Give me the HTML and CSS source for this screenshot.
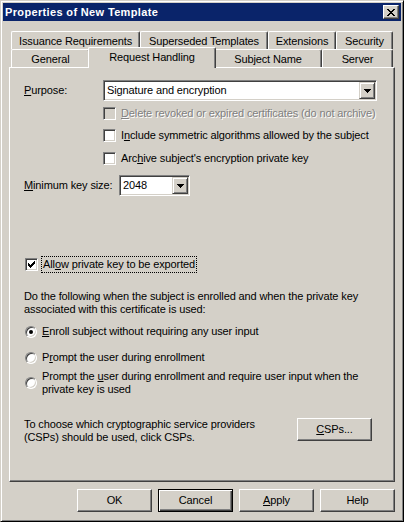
FILE: index.html
```html
<!DOCTYPE html>
<html lang="en">
<head>
    <meta charset="UTF-8">
    <meta name="viewport" content="width=device-width, initial-scale=1.0">
    <title>Properties of New Template</title>
    <link rel="stylesheet" href="styles.css">
</head>
<body>

    <div class="window">
        <div class="titlebar">
            <span class="title">Properties of New Template</span>
            <button class="close-btn">
                <svg width="8" height="7" viewBox="0 0 8 7" shape-rendering="crispEdges"><path d="M0 0h2v1H0zM6 0h2v1H6zM1 1h2v1H1zM5 1h2v1H5zM2 2h4v1H2zM3 3h2v1H3zM2 4h4v1H2zM1 5h2v1H1zM5 5h2v1H5zM0 6h2v1H0zM6 6h2v1H6z" fill="#000"/></svg>
            </button>
        </div>

        <div class="tabs">
            <div class="tab-row">
                <div class="tab tab-issuance">Issuance Requirements</div>
                <div class="tab tab-superseded">Superseded Templates</div>
                <div class="tab tab-extensions">Extensions</div>
                <div class="tab tab-security">Security</div>
            </div>
            <div class="tab-row">
                <div class="tab tab-general">General</div>
                <div class="tab tab-request tab-active">Request Handling</div>
                <div class="tab tab-subject">Subject Name</div>
                <div class="tab tab-server">Server</div>
            </div>
        </div>

        <div class="panel">
            <div class="field-row purpose-row">
                <span class="field-label purpose-label"><u>P</u>urpose:</span>
                <div class="combo combo-purpose">
                    <span class="combo-text">Signature and encryption</span>
                    <span class="combo-btn">
                        <svg width="7" height="4" viewBox="0 0 7 4" shape-rendering="crispEdges"><path d="M0 0h7v1H0zM1 1h5v1H1zM2 2h3v1H2zM3 3h1v1H3z" fill="#000"/></svg>
                    </span>
                </div>
            </div>

            <div class="check-row indent-row row-delete">
                <span class="checkbox checkbox-disabled"></span>
                <span class="check-label disabled"><u>D</u>elete revoked or expired certificates (do not archive)</span>
            </div>
            <div class="check-row indent-row row-include">
                <span class="checkbox"></span>
                <span class="check-label">I<u>n</u>clude symmetric algorithms allowed by the subject</span>
            </div>
            <div class="check-row indent-row row-archive">
                <span class="checkbox"></span>
                <span class="check-label">Arc<u>h</u>ive subject's encryption private key</span>
            </div>

            <div class="field-row keysize-row">
                <span class="field-label keysize-label"><u>M</u>inimum key size:</span>
                <div class="combo combo-keysize">
                    <span class="combo-text">2048</span>
                    <span class="combo-btn">
                        <svg width="7" height="4" viewBox="0 0 7 4" shape-rendering="crispEdges"><path d="M0 0h7v1H0zM1 1h5v1H1zM2 2h3v1H2zM3 3h1v1H3z" fill="#000"/></svg>
                    </span>
                </div>
            </div>

            <div class="check-row allow-row">
                <span class="checkbox">
                    <svg width="7" height="7" viewBox="0 0 7 7" shape-rendering="crispEdges"><path d="M6 0h1v1H6zM5 1h2v1H5zM0 2h1v1H0zM4 2h3v1H4zM0 3h2v1H0zM3 3h3v1H3zM0 4h5v1H0zM1 5h3v1H1zM2 6h1v1H2z" fill="#000"/></svg>
                </span>
                <span class="check-label focused">All<u>o</u>w private key to be exported</span>
            </div>

            <p class="note">Do the following when the subject is enrolled and when the private key<br>associated with this certificate is used:</p>

            <div class="radio-row row-radio1">
                <span class="radio radio-on"></span>
                <span class="radio-label"><u>E</u>nroll subject without requiring any user input</span>
            </div>
            <div class="radio-row row-radio2">
                <span class="radio"></span>
                <span class="radio-label">P<u>r</u>ompt the user during enrollment</span>
            </div>
            <div class="radio-row row-radio3">
                <span class="radio"></span>
                <span class="radio-label">Prompt the <u>u</u>ser during enrollment and require user input when the<br>private key is used</span>
            </div>

            <div class="csp-row">
                <p class="csp-text">To choose which cryptographic service providers<br>(CSPs) should be used, click CSPs.</p>
                <button class="btn"><u>C</u>SPs...</button>
            </div>
        </div>

        <div class="button-row">
            <button class="btn">OK</button>
            <button class="btn btn-default">Cancel</button>
            <button class="btn"><u>A</u>pply</button>
            <button class="btn">Help</button>
        </div>
    </div>

</body>
</html>
```

FILE: styles.css
```css
body {
    margin: 0;
    background-color: #d4d0c8;
    font-family: "Liberation Sans", Arial, sans-serif;
    font-size: 11px;
    line-height: 13px;
    letter-spacing: -0.12px;
    color: #000;
}
u {
    text-decoration-thickness: 1px;
    text-underline-offset: 1px;
}
.window {
    width: 404px;
    height: 522px;
    box-sizing: border-box;
    background: #d4d0c8;
    border: 1px solid;
    border-color: #d4d0c8 #000 #000 #d4d0c8;
    box-shadow: inset 1px 1px #fff, inset -1px -1px #808080;
    padding: 2px;
}
.titlebar {
    display: flex;
    align-items: center;
    justify-content: space-between;
    height: 18px;
    background: #0a246a;
    padding: 0 2px;
}
.title {
    color: #fff;
    font-weight: bold;
    letter-spacing: 0.35px;
}
.close-btn {
    width: 16px;
    height: 14px;
    box-sizing: border-box;
    padding: 0;
    background: #d4d0c8;
    border: 1px solid;
    border-color: #fff #404040 #404040 #fff;
    box-shadow: inset -1px -1px #808080;
    display: flex;
    align-items: center;
    justify-content: center;
}

/* tabs */
.tabs {
    margin: 10px 0 0 8px;
}
.tab-row {
    display: flex;
    align-items: flex-start;
    height: 18px;
}
.tab {
    height: 18px;
    box-sizing: border-box;
    display: flex;
    align-items: center;
    justify-content: center;
    padding-top: 1px;
    background: #d4d0c8;
    border-top: 1px solid #fff;
    border-left: 1px solid #fff;
    border-right: 1px solid #404040;
    box-shadow: inset -1px 0 #808080;
    border-radius: 2px 2px 0 0;
    white-space: nowrap;
}
.tab-issuance { width: 129px; }
.tab-superseded { width: 128px; }
.tab-extensions { width: 68px; }
.tab-security { width: 57px; }
.tab-general { width: 79px; }
.tab-request { width: 128px; }
.tab-subject { width: 108px; }
.tab-server { width: 71px; }
.tab-active {
    position: relative;
    z-index: 1;
    height: 21px;
    margin: -2px -2px -1px;
    padding-top: 0;
    padding-bottom: 1px;
}

/* panel */
.panel {
    margin-left: 6px;
    width: 386px;
    height: 415px;
    box-sizing: border-box;
    border: 1px solid;
    border-color: #fff #404040 #404040 #fff;
    box-shadow: inset -1px -1px #808080;
    padding-left: 14px;
}
.field-row {
    display: flex;
    align-items: center;
    height: 21px;
}
.purpose-row { margin-top: 12px; }
.purpose-label { width: 79px; }
.combo-purpose { width: 274px; }
.keysize-row { margin-top: 10px; }
.keysize-label { width: 95px; }
.combo-keysize { width: 71px; }

.combo {
    display: flex;
    align-items: center;
    height: 21px;
    box-sizing: border-box;
    padding: 1px;
    background: #fff;
    border: 1px solid;
    border-color: #808080 #fff #fff #808080;
    box-shadow: inset 1px 1px #404040, inset -1px -1px #d4d0c8;
}
.combo-text {
    flex: 1;
    padding-left: 2px;
    white-space: nowrap;
}
.combo-btn {
    width: 16px;
    height: 17px;
    box-sizing: border-box;
    display: flex;
    align-items: center;
    justify-content: center;
    background: #d4d0c8;
    border: 1px solid;
    border-color: #d4d0c8 #404040 #404040 #d4d0c8;
    box-shadow: inset 1px 1px #fff, inset -1px -1px #808080;
}

.check-row {
    display: flex;
    align-items: center;
    height: 13px;
}
.indent-row { padding-left: 79px; }
.row-delete { margin-top: 6px; }
.row-include { margin-top: 9px; }
.row-archive { margin-top: 10px; }
.checkbox {
    width: 13px;
    height: 13px;
    flex-shrink: 0;
    box-sizing: border-box;
    display: flex;
    align-items: center;
    justify-content: center;
    margin-right: 5px;
    background: #fff;
    border: 1px solid;
    border-color: #808080 #fff #fff #808080;
    box-shadow: inset 1px 1px #404040, inset -1px -1px #d4d0c8;
}
.checkbox-disabled { background: #d4d0c8; }
.disabled {
    color: #808080;
    text-shadow: 1px 1px 0 #fff;
}
.check-label { white-space: nowrap; }

.allow-row {
    margin-top: 60px;
    height: 17px;
    padding-left: 1px;
}
.allow-row .checkbox { margin-right: 3px; }
.focused {
    border: 1px dotted #000;
    padding: 1px 1px;
}

.note {
    margin: 17px 0 0;
}

.radio-row {
    display: flex;
    align-items: center;
    padding-left: 1px;
    min-height: 13px;
}
.row-radio1 { margin-top: 9px; }
.row-radio2 { margin-top: 13px; }
.row-radio3 { margin-top: 6px; }
.radio {
    width: 12px;
    height: 12px;
    flex-shrink: 0;
    box-sizing: border-box;
    display: flex;
    align-items: center;
    justify-content: center;
    margin-right: 5px;
    border-radius: 50%;
    background: #fff;
    border: 1px solid;
    border-color: #808080 #fff #fff #808080;
    box-shadow: inset 1px 1px #404040, inset -1px -1px #d4d0c8;
}
.radio-on::after {
    content: "";
    width: 4px;
    height: 4px;
    border-radius: 50%;
    background: #000;
}

.csp-row {
    display: flex;
    align-items: flex-start;
    margin-top: 22px;
}
.csp-text {
    width: 273px;
    margin: 0;
}

/* buttons */
.btn {
    width: 75px;
    height: 23px;
    box-sizing: border-box;
    padding: 0;
    font: inherit;
    letter-spacing: inherit;
    color: #000;
    background: #d4d0c8;
    border: 1px solid;
    border-color: #fff #404040 #404040 #fff;
    box-shadow: inset -1px -1px #808080;
}
.btn-default {
    border-color: #000;
    box-shadow: inset 1px 1px #fff, inset -1px -1px #404040, inset -2px -2px #808080;
}
.button-row {
    display: flex;
    justify-content: flex-end;
    gap: 6px;
    margin-top: 7px;
    padding-right: 6px;
}
```
